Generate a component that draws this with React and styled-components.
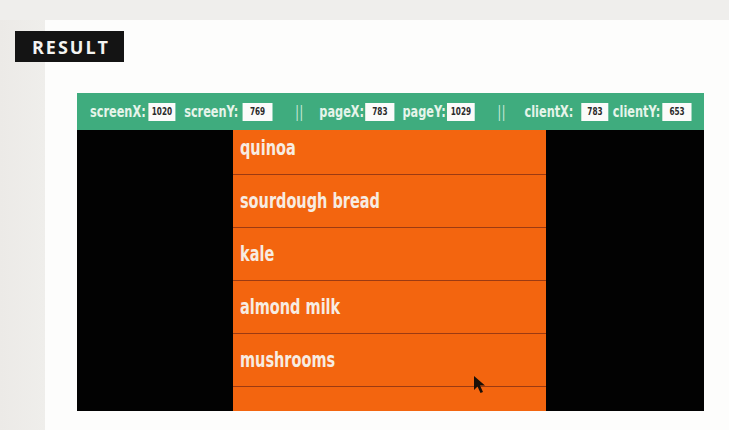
import { createGlobalStyle, styled } from "styled-components";

const GlobalStyle = createGlobalStyle`
  html, body {
    margin: 0;
    padding: 0;
    background: #efeeec;
  }
  body {
    width: 729px;
    height: 430px;
    overflow: hidden;
  }
`;

const Page = styled.div`
  padding-top: 20px;
  height: 430px;
  box-sizing: border-box;
`;

const Sheet = styled.div`
  height: 410px;
  padding: 11px 0 0 15px;
  box-sizing: border-box;
  background: linear-gradient(to right, #eceae7 0, #efeeeb 45px, #fdfdfc 45px);
  display: flex;
  flex-direction: column;
  align-items: flex-start;
`;

const Badge = styled.div`
  width: 109px;
  height: 31px;
  background: #141414;
  color: #f4f4f2;
  font-family: "Open Sans", "DejaVu Sans", sans-serif;
  font-weight: 700;
  font-size: 18px;
  letter-spacing: 2px;
  display: flex;
  align-items: center;
  justify-content: center;
  box-sizing: border-box;
  padding-left: 3px;
`;

const Frame = styled.div`
  margin: 31px 0 0 62px;
  width: 627px;
  height: 318px;
  display: flex;
  flex-direction: column;
  background: #020202;
`;

const CoordBar = styled.div`
  height: 37px;
  flex-shrink: 0;
  background: #3fac7e;
  display: flex;
  align-items: center;
  padding-left: 13px;
`;

/* the reference uses a tall condensed face, so the row is squeezed horizontally */
const CoordRow = styled.div`
  display: flex;
  align-items: center;
  transform: scaleX(0.73);
  transform-origin: left center;
  font-family: "DejaVu Sans", sans-serif;
  font-weight: 700;
  white-space: nowrap;
`;

const Label = styled.span`
  flex: none;
  width: ${(p) => p.$w}px;
  margin-left: ${(p) => p.$gap || 0}px;
  color: #e6f4ea;
  font-size: 15.5px;
`;

const Value = styled.span`
  flex: none;
  width: ${(p) => p.$w}px;
  height: 18px;
  margin-left: ${(p) => p.$gap ?? 5}px;
  background: #fbfbfa;
  color: #2a2a2a;
  font-size: 10px;
  display: flex;
  align-items: center;
  justify-content: center;
`;

const Divider = styled.span`
  flex: none;
  margin-left: ${(p) => p.$gap}px;
  color: #cfeadb;
  font-size: 15px;
  font-weight: 400;
  letter-spacing: 1px;
`;

const Stage = styled.div`
  flex: 1;
  overflow: hidden;
  position: relative;
  padding-left: 156px;
`;

const List = styled.ul`
  list-style: none;
  margin: -8px 0 0;
  padding: 0;
  width: 313px;
  background: #f3650f;
`;

const Item = styled.li`
  height: 52px;
  border-bottom: 1px solid #9c3a12;
  display: flex;
  align-items: center;
  padding-left: 7px;
`;

const ItemText = styled.span`
  display: inline-block;
  transform: scaleX(0.69);
  transform-origin: left center;
  white-space: nowrap;
  color: #f7ece2;
  font-family: "DejaVu Sans", sans-serif;
  font-weight: 700;
  font-size: 21px;
`;

const Pointer = styled.svg`
  position: absolute;
  left: 396px;
  top: 245px;
`;

const items = ["quinoa", "sourdough bread", "kale", "almond milk", "mushrooms", ""];

export default function App() {
  return (
    <Page>
      <GlobalStyle />
      <Sheet>
        <Badge>RESULT</Badge>
        <Frame>
          <CoordBar>
            <CoordRow>
              <Label $w={75}>screenX:</Label>
              <Value $w={37}>1020</Value>
              <Label $w={75} $gap={12}>screenY:</Label>
              <Value $w={41}>769</Value>
              <Divider $gap={31}>||</Divider>
              <Label $w={58} $gap={21}>pageX:</Label>
              <Value $w={40}>783</Value>
              <Label $w={58} $gap={11}>pageY:</Label>
              <Value $w={38} $gap={3}>1029</Value>
              <Divider $gap={31}>||</Divider>
              <Label $w={73} $gap={25}>clientX:</Label>
              <Value $w={37}>783</Value>
              <Label $w={64} $gap={6}>clientY:</Label>
              <Value $w={40} $gap={4}>653</Value>
            </CoordRow>
          </CoordBar>
          <Stage>
            <List>
              {items.map((name, i) => (
                <Item key={i}>
                  <ItemText>{name}</ItemText>
                </Item>
              ))}
            </List>
            <Pointer width="14" height="20" viewBox="0 0 14 20">
              <path d="M1 1 L1 15 L4.5 11.5 L7.5 18 L10 17 L7 10.5 L12 10.5 Z" fill="#1a1008" />
            </Pointer>
          </Stage>
        </Frame>
      </Sheet>
    </Page>
  );
}
